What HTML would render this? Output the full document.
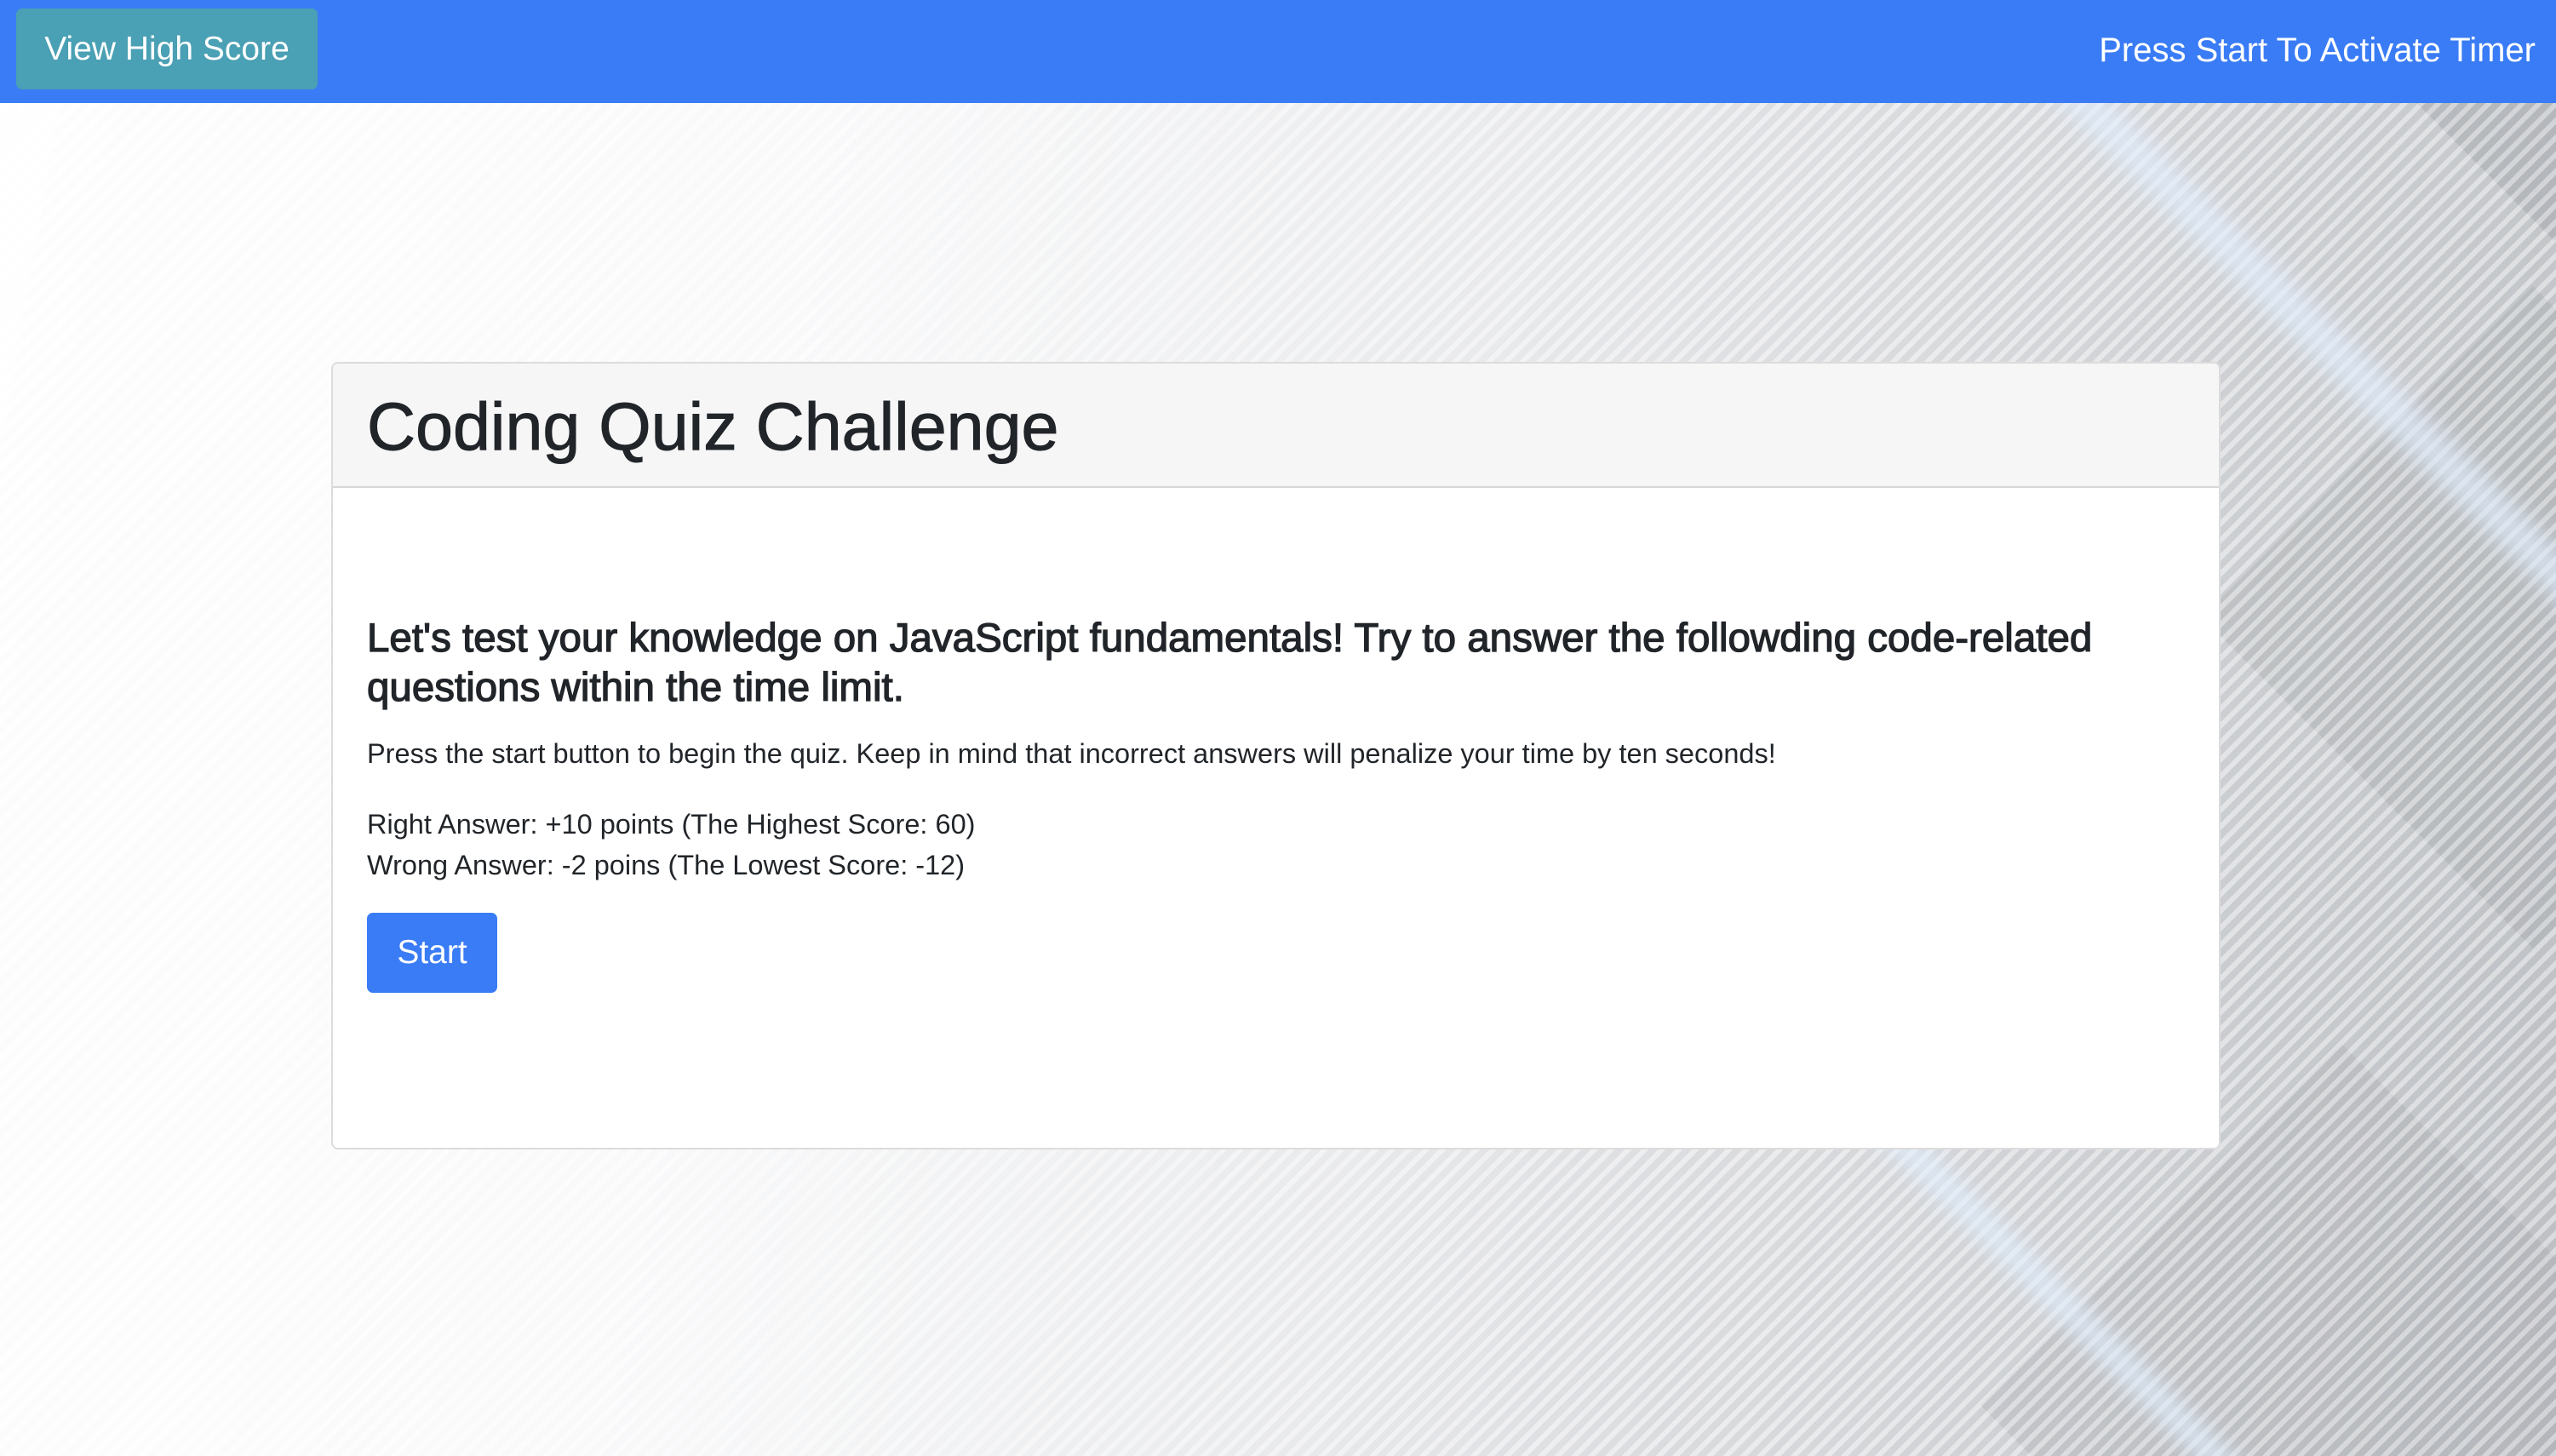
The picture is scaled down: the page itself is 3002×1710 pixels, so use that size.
<!DOCTYPE html>
<html><head><meta charset="utf-8"><style>
*{box-sizing:border-box;margin:0;padding:0}
html,body{width:3002px;height:1710px;overflow:hidden}
body{font-family:"Liberation Sans",sans-serif;color:#212529;position:relative;
background:linear-gradient(100deg,#ffffff 0%,#fcfcfd 30%,#eff0f2 55%,#dcdee1 75%,#c4c7cb 100%);}
#bg{position:absolute;left:0;top:0;width:3002px;height:1710px;overflow:hidden}
.str{position:absolute;inset:0;background:repeating-linear-gradient(-45deg,rgba(255,255,255,0.35) 0 6px,rgba(0,0,0,0.035) 6px 14px);
-webkit-mask-image:linear-gradient(100deg,rgba(0,0,0,0.15) 0%,rgba(0,0,0,0.4) 40%,#000 70%);}
.d{position:absolute;transform:rotate(45deg);}
nav{position:absolute;left:0;top:0;width:3002px;height:121px;background:#3a7cf6;}
.hs{position:absolute;left:19px;top:10px;width:354px;height:95px;background:#4aa0b4;border-radius:7px;color:#fff;font-size:39px;line-height:95px;text-align:center;}
.tm{position:absolute;right:24px;top:0;line-height:118px;color:#fff;font-size:40px;}
.card{position:absolute;left:389px;top:425px;width:2219px;height:925px;background:#fff;border:2px solid #dcdcdc;border-radius:8px;overflow:hidden}
.ch{height:146px;background:#f6f6f6;border-bottom:2px solid #d6d6d6;}
.ch h1{font-weight:normal;font-size:79px;position:absolute;left:40px;top:28px;-webkit-text-stroke:1px #212529}
.b{position:absolute;left:40px;}
h2{font-size:47.5px;font-weight:normal;line-height:58px;-webkit-text-stroke:1.3px #212529}
p{font-size:32.5px;}
.st{position:absolute;left:40px;top:645px;width:153px;height:94px;background:#3a7cf6;color:#fff;border-radius:7px;font-size:39px;line-height:94px;text-align:center}
</style></head><body>
<div id="bg">
<div class="d" style="left:2700px;top:450px;width:550px;height:550px;background:rgba(120,125,130,0.15)"></div>
<div class="d" style="left:2800px;top:-200px;width:400px;height:400px;background:rgba(120,125,130,0.2)"></div>
<div class="d" style="left:2450px;top:1350px;width:600px;height:600px;background:rgba(120,125,130,0.12)"></div>
<div class="str"></div>
<div style="position:absolute;left:2400px;top:100px;width:40px;height:1600px;transform:rotate(-45deg);transform-origin:0 0;background:rgba(225,238,255,0.7);filter:blur(14px)"></div>
<div style="position:absolute;left:2150px;top:1280px;width:30px;height:700px;transform:rotate(-45deg);transform-origin:0 0;background:rgba(225,238,255,0.7);filter:blur(12px)"></div>
</div>
<nav><div class="hs">View High Score</div><div class="tm">Press Start To Activate Timer</div></nav>
<div class="card">
<div class="ch"><h1>Coding Quiz Challenge</h1></div>
<h2 class="b" style="top:294px">Let's test your knowledge on JavaScript fundamentals! Try to answer the followding code-related<br>questions within the time limit.</h2>
<p class="b" style="top:440px">Press the start button to begin the quiz. Keep in mind that incorrect answers will penalize your time by ten seconds!</p>
<p class="b" style="top:517px;line-height:48px">Right Answer: +10 points (The Highest Score: 60)<br>Wrong Answer: -2 poins (The Lowest Score: -12)</p>
<div class="st">Start</div>
</div>
</body></html>
